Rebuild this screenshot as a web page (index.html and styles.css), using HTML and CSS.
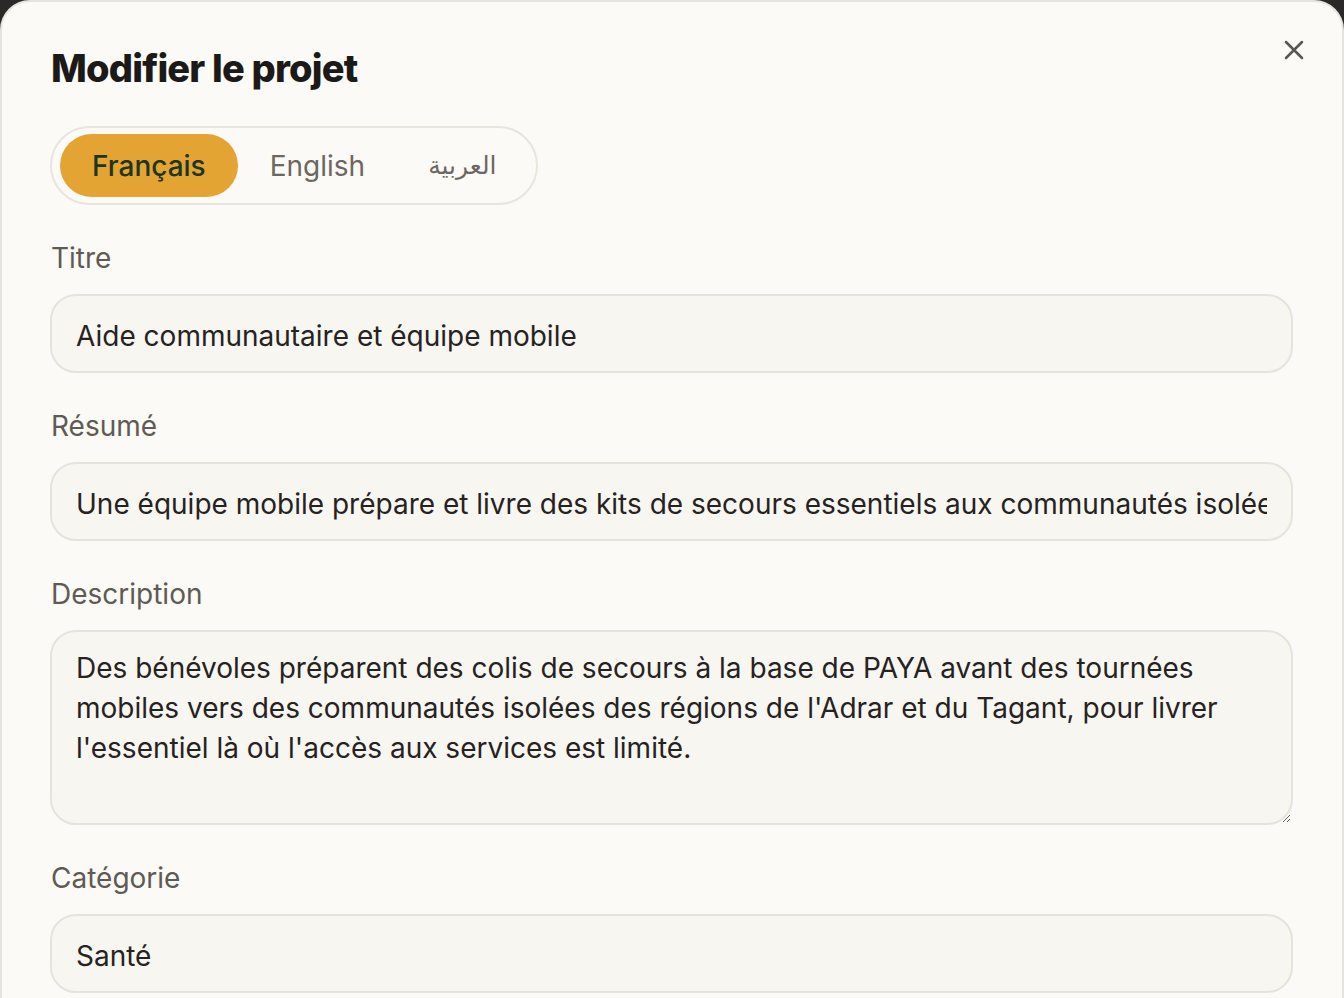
FILE: index.html
```html
<!DOCTYPE html>
<html lang="fr">
<head>
<meta charset="utf-8">
<title>Modifier le projet</title>
<link rel="stylesheet" href="styles.css">
</head>
<body>
<div class="modal">
  <header class="modal-header">
    <h1 class="modal-title">Modifier le projet</h1>
    <button class="close-btn" aria-label="Fermer">
      <svg width="20" height="20" viewBox="0 0 20 20" fill="none" stroke="#5a5753" stroke-width="2.5" stroke-linecap="round"><path d="M2 2L18 18M18 2L2 18"/></svg>
    </button>
  </header>

  <div class="lang-tabs">
    <button class="lang-tab active">Français</button>
    <button class="lang-tab">English</button>
    <button class="lang-tab arabic" lang="ar" dir="rtl">العربية</button>
  </div>

  <div class="field">
    <label class="field-label">Titre</label>
    <input class="field-input" type="text" value="Aide communautaire et équipe mobile">
  </div>

  <div class="field">
    <label class="field-label">Résumé</label>
    <input class="field-input" type="text" value="Une équipe mobile prépare et livre des kits de secours essentiels aux communautés isolées de l'Adrar et du Tagant.">
  </div>

  <div class="field">
    <label class="field-label">Description</label>
    <textarea class="field-input field-textarea">Des bénévoles préparent des colis de secours à la base de PAYA avant des tournées mobiles vers des communautés isolées des régions de l'Adrar et du Tagant, pour livrer l'essentiel là où l'accès aux services est limité.</textarea>
  </div>

  <div class="field">
    <label class="field-label">Catégorie</label>
    <input class="field-input" type="text" value="Santé">
  </div>
</div>
</body>
</html>
```
FILE: styles.css
```css
html, body {
  margin: 0;
  padding: 0;
  height: 100%;
  overflow: hidden;
}
body {
  background: #2a2927;
  font-family: Inter, "Noto Sans", sans-serif;
}
.modal {
  box-sizing: border-box;
  width: 1344px;
  min-height: 1100px;
  background: #fbfaf6;
  border: 2px solid #e6e4df;
  border-radius: 30px;
  padding: 0 49px 0 48px;
}
.modal-header {
  display: flex;
  justify-content: space-between;
  align-items: flex-start;
  padding-top: 42px;
}
.modal-title {
  margin: 0;
  font-family: Inter, sans-serif;
  font-weight: 800;
  font-size: 38px;
  line-height: 48px;
  letter-spacing: -0.8px;
  color: #1c1a18;
  padding-left: 1px;
}
.close-btn {
  background: none;
  border: 0;
  padding: 0;
  margin: -4px -11px 0 0;
  width: 20px;
  height: 20px;
  cursor: pointer;
  display: flex;
}
.lang-tabs {
  display: inline-flex;
  align-items: center;
  margin-top: 34px;
  padding: 6px 40px 6px 8px;
  border: 2px solid #e8e5df;
  border-radius: 999px;
  background: #fbfaf6;
}
.lang-tab {
  border: 0;
  background: none;
  font-family: Inter, sans-serif;
  font-size: 28px;
  color: #6d6761;
  height: 63px;
  padding: 0 32px;
  border-radius: 999px;
  cursor: pointer;
}
.lang-tab.active {
  background: #e3a434;
  color: #1e3520;
  font-weight: 500;
}
.lang-tab.arabic {
  font-family: "DejaVu Sans", sans-serif;
  font-size: 25px;
  padding: 0 0 0 31px;
}
.field {
  display: flex;
  flex-direction: column;
}
.field-label {
  font-size: 28px;
  line-height: 36px;
  color: #5f5a55;
  margin-top: 35px;
  margin-bottom: 18px;
  padding-left: 1px;
}
.field-input {
  box-sizing: border-box;
  width: 100%;
  height: 79px;
  border: 2px solid #e6e3dd;
  border-radius: 26px;
  background: #f8f6f1;
  font-family: Inter, sans-serif;
  font-size: 28px;
  color: #26221f;
  padding: 4px 24px 0;
  outline: none;
}
.field-textarea {
  height: 195px;
  padding: 16px 24px;
  line-height: 40px;
  resize: vertical;
}
```
